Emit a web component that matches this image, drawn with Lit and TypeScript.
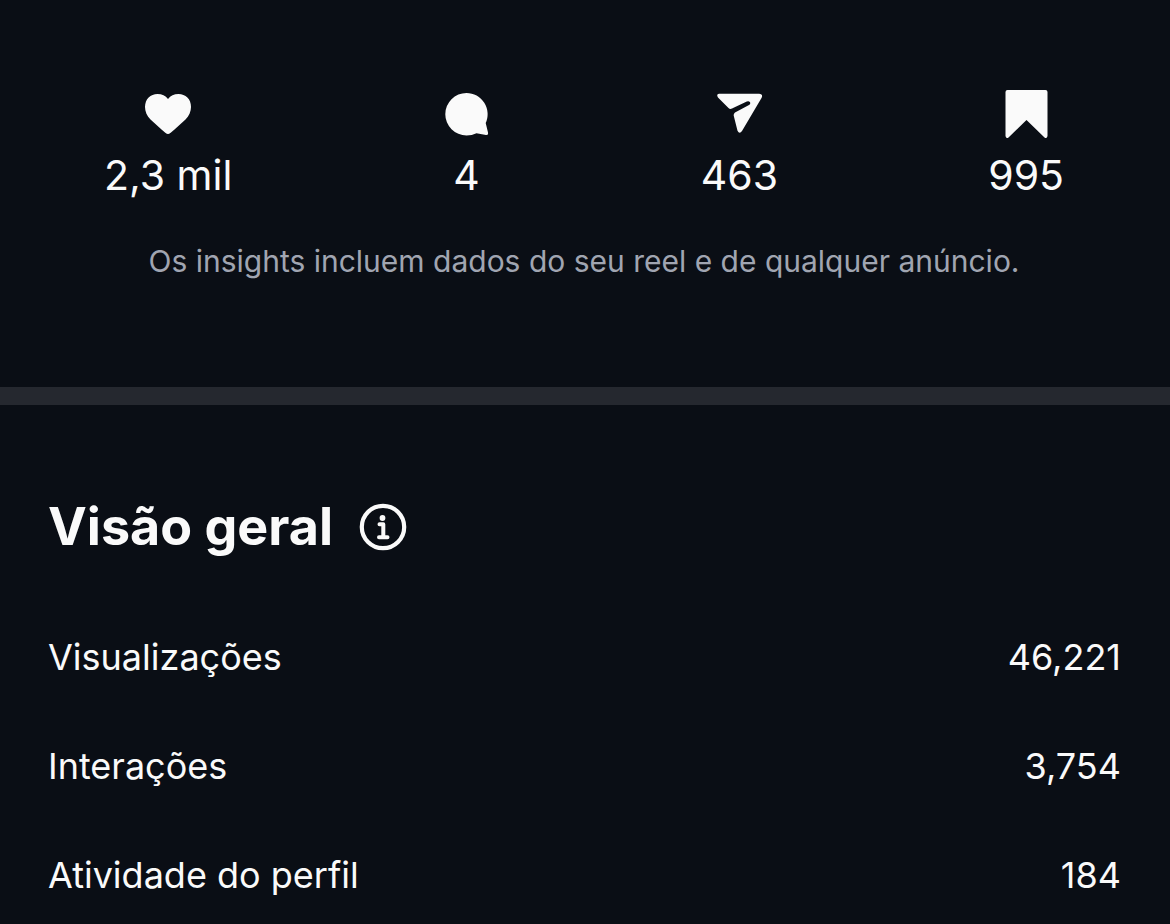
import { LitElement, html, css, svg } from "lit";
import { customElement } from "lit/decorators.js";

const icons = {
  heart: svg`<path d="M24 46C22.500 46 20.500 44.200 17.500 41.500L6.500 31.500C3 28 1 23.500 1 19C1 11 6.500 6 13.500 6C18 6 21.500 7.500 24 11C26.500 7.500 30 6 34.500 6C41.500 6 47 11 47 19C47 23.500 45 28 41.500 31.500L30.500 41.500C27.500 44.200 25.500 46 24 46Z"/>`,
  comment: svg`<path d="M23.500 5A21.200 21.200 0 1 0 23.500 47.400Q29 47.400 33.500 45.200L43 47Q45.500 47.200 45 44.600L42.700 35A21.200 21.200 0 0 0 23.500 5Z"/>`,
  share: svg`<path d="M4 5.700H44Q48.500 6 46.500 10L27 43Q24.500 46.500 22.500 42.800L18.800 28Q18.300 25.800 20 24.500L34 17Q36 15.500 34.800 14Q33.800 12.700 31.800 13.500L17 20.500Q15 21.500 13.500 20L3 9.500Q1 6.200 4 5.700Z"/>`,
  save: svg`<path d="M5.500 2H43.500Q45.500 2 45.500 4V48Q45 51 42.500 49.500L24.500 32L6.500 49.500Q4 51 3.500 48V4Q3.500 2 5.500 2Z"/>`,
};

const stats = [
  { icon: icons.heart, label: "Curtidas", value: "2,3 mil" },
  { icon: icons.comment, label: "Comentários", value: "4" },
  { icon: icons.share, label: "Compartilhamentos", value: "463" },
  { icon: icons.save, label: "Salvamentos", value: "995" },
];

const overview = [
  ["Visualizações", "46,221"],
  ["Interações", "3,754"],
  ["Atividade do perfil", "184"],
];

@customElement("app-root")
export class AppRoot extends LitElement {
  static styles = css`
    :host {
      display: block;
      min-height: 100vh;
      background: #0a0e15;
      color: #fafafa;
      font-family: Inter, sans-serif;
    }
    .summary { padding: 88px 106px 108px 104px; border-bottom: 18px solid #25282f; }
    .stats { display: flex; justify-content: space-between; margin: 0; padding: 0; list-style: none; }
    .stat { display: flex; flex-direction: column; align-items: center; gap: 9px; font-size: 41px; line-height: 52px; }
    .icon { display: block; width: 48px; height: 52px; fill: currentColor; }
    .note { margin: 42px 0 0; text-align: center; color: #a0a5b1; font-size: 30px; line-height: 36px; }
    .overview { padding: 88px 49px 0 48px; }
    .heading { display: flex; align-items: center; gap: 26px; }
    h2 { margin: 0; font-size: 52px; line-height: 68px; font-weight: 700; }
    .info { display: flex; padding: 0; border: 0; background: none; color: inherit; }
    .info svg { width: 48px; height: 48px; }
    .rows { margin: 74px 0 0; }
    .row { display: flex; justify-content: space-between; margin: 0 0 64px; font-size: 36px; line-height: 45px; }
    .row:last-child { margin: 0; }
    dd { margin: 0; }
  `;

  render() {
    return html`
      <section class="summary">
        <ul class="stats">
          ${stats.map((s) => html`<li class="stat">
            <svg class="icon" viewBox="0 0 48 52" role="img" aria-label=${s.label}>${s.icon}</svg>
            <span>${s.value}</span>
          </li>`)}
        </ul>
        <p class="note">Os insights incluem dados do seu reel e de qualquer anúncio.</p>
      </section>
      <section class="overview">
        <div class="heading">
          <h2>Visão geral</h2>
          <button class="info" aria-label="Informações">
            <svg viewBox="0 0 48 48" aria-hidden="true">
              <circle cx="24" cy="24" r="21.200" fill="none" stroke="currentColor" stroke-width="4.200"/>
              <circle cx="23.500" cy="15" r="2.900" fill="currentColor"/>
              <path d="M20.500 21.200H24.300V33.500M20 34.300H28.500" fill="none" stroke="currentColor" stroke-width="4" stroke-linecap="round" stroke-linejoin="round"/>
            </svg>
          </button>
        </div>
        <dl class="rows">
          ${overview.map(([k, v]) => html`<div class="row"><dt>${k}</dt><dd>${v}</dd></div>`)}
        </dl>
      </section>
    `;
  }
}
